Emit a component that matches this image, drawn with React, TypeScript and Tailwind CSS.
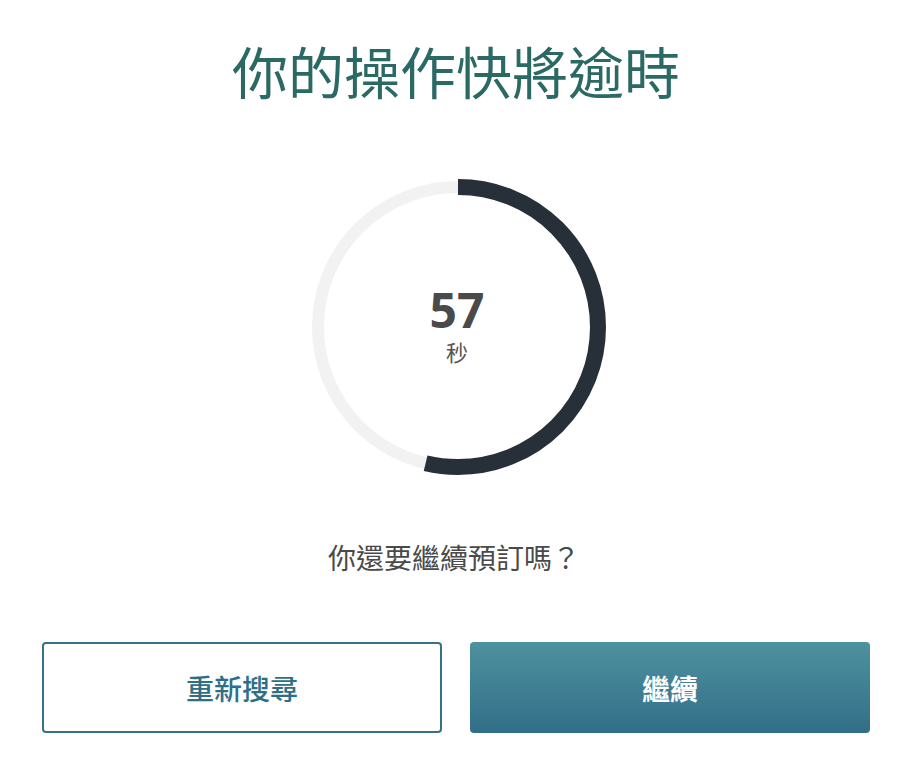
import React from "react";

const R = 140;
const C = 2 * Math.PI * R;
const frac = 0.537;

export default function App() {
  return (
    <div
      className="w-[908px] h-[764px] bg-white flex flex-col"
      style={{ fontFamily: '"Noto Sans CJK TC", "Noto Sans", sans-serif' }}
    >
      <h1 className="mt-[38px] ml-[4px] text-center text-[56px] leading-[64px] font-normal text-[#2b6964]">
        你的操作快將逾時
      </h1>
      <div className="mt-[77px] self-center relative w-[296px] h-[296px] ml-[8px]">
        <svg width="296" height="296" viewBox="0 0 296 296">
          <circle cx="148" cy="148" r={R} fill="none" stroke="#f2f2f2" strokeWidth="12" />
          <circle
            cx="148"
            cy="148"
            r={R}
            fill="none"
            stroke="#272f38"
            strokeWidth="16"
            strokeDasharray={`${C * frac} ${C}`}
            transform="rotate(-90 148 148)"
          />
        </svg>
        <div className="absolute inset-0 flex flex-col items-center pt-[105px]">
          <div
            className="text-[48px] leading-[52px] font-bold text-[#4a4a4a] -ml-[2px]"
            style={{ fontFamily: '"Open Sans", sans-serif' }}
          >
            57
          </div>
          <div className="text-[22px] leading-[26px] text-[#555555] mt-[2px] -ml-[2px]">秒</div>
        </div>
      </div>
      <p className="mt-[66px] text-center text-[28px] leading-[32px] text-[#4a4a4a]">
        你還要繼續預訂嗎？
      </p>
      <div className="mt-[69px] ml-[42px] flex gap-[28px]">
        <button className="w-[400px] h-[91px] rounded-[4px] border-2 border-[#347387] bg-white text-[#2f6f86] text-[28px] font-medium">
          重新搜尋
        </button>
        <button className="w-[400px] h-[91px] rounded-[4px] bg-gradient-to-b from-[#4f919f] to-[#316f88] text-white text-[28px] font-bold">
          繼續
        </button>
      </div>
    </div>
  );
}
